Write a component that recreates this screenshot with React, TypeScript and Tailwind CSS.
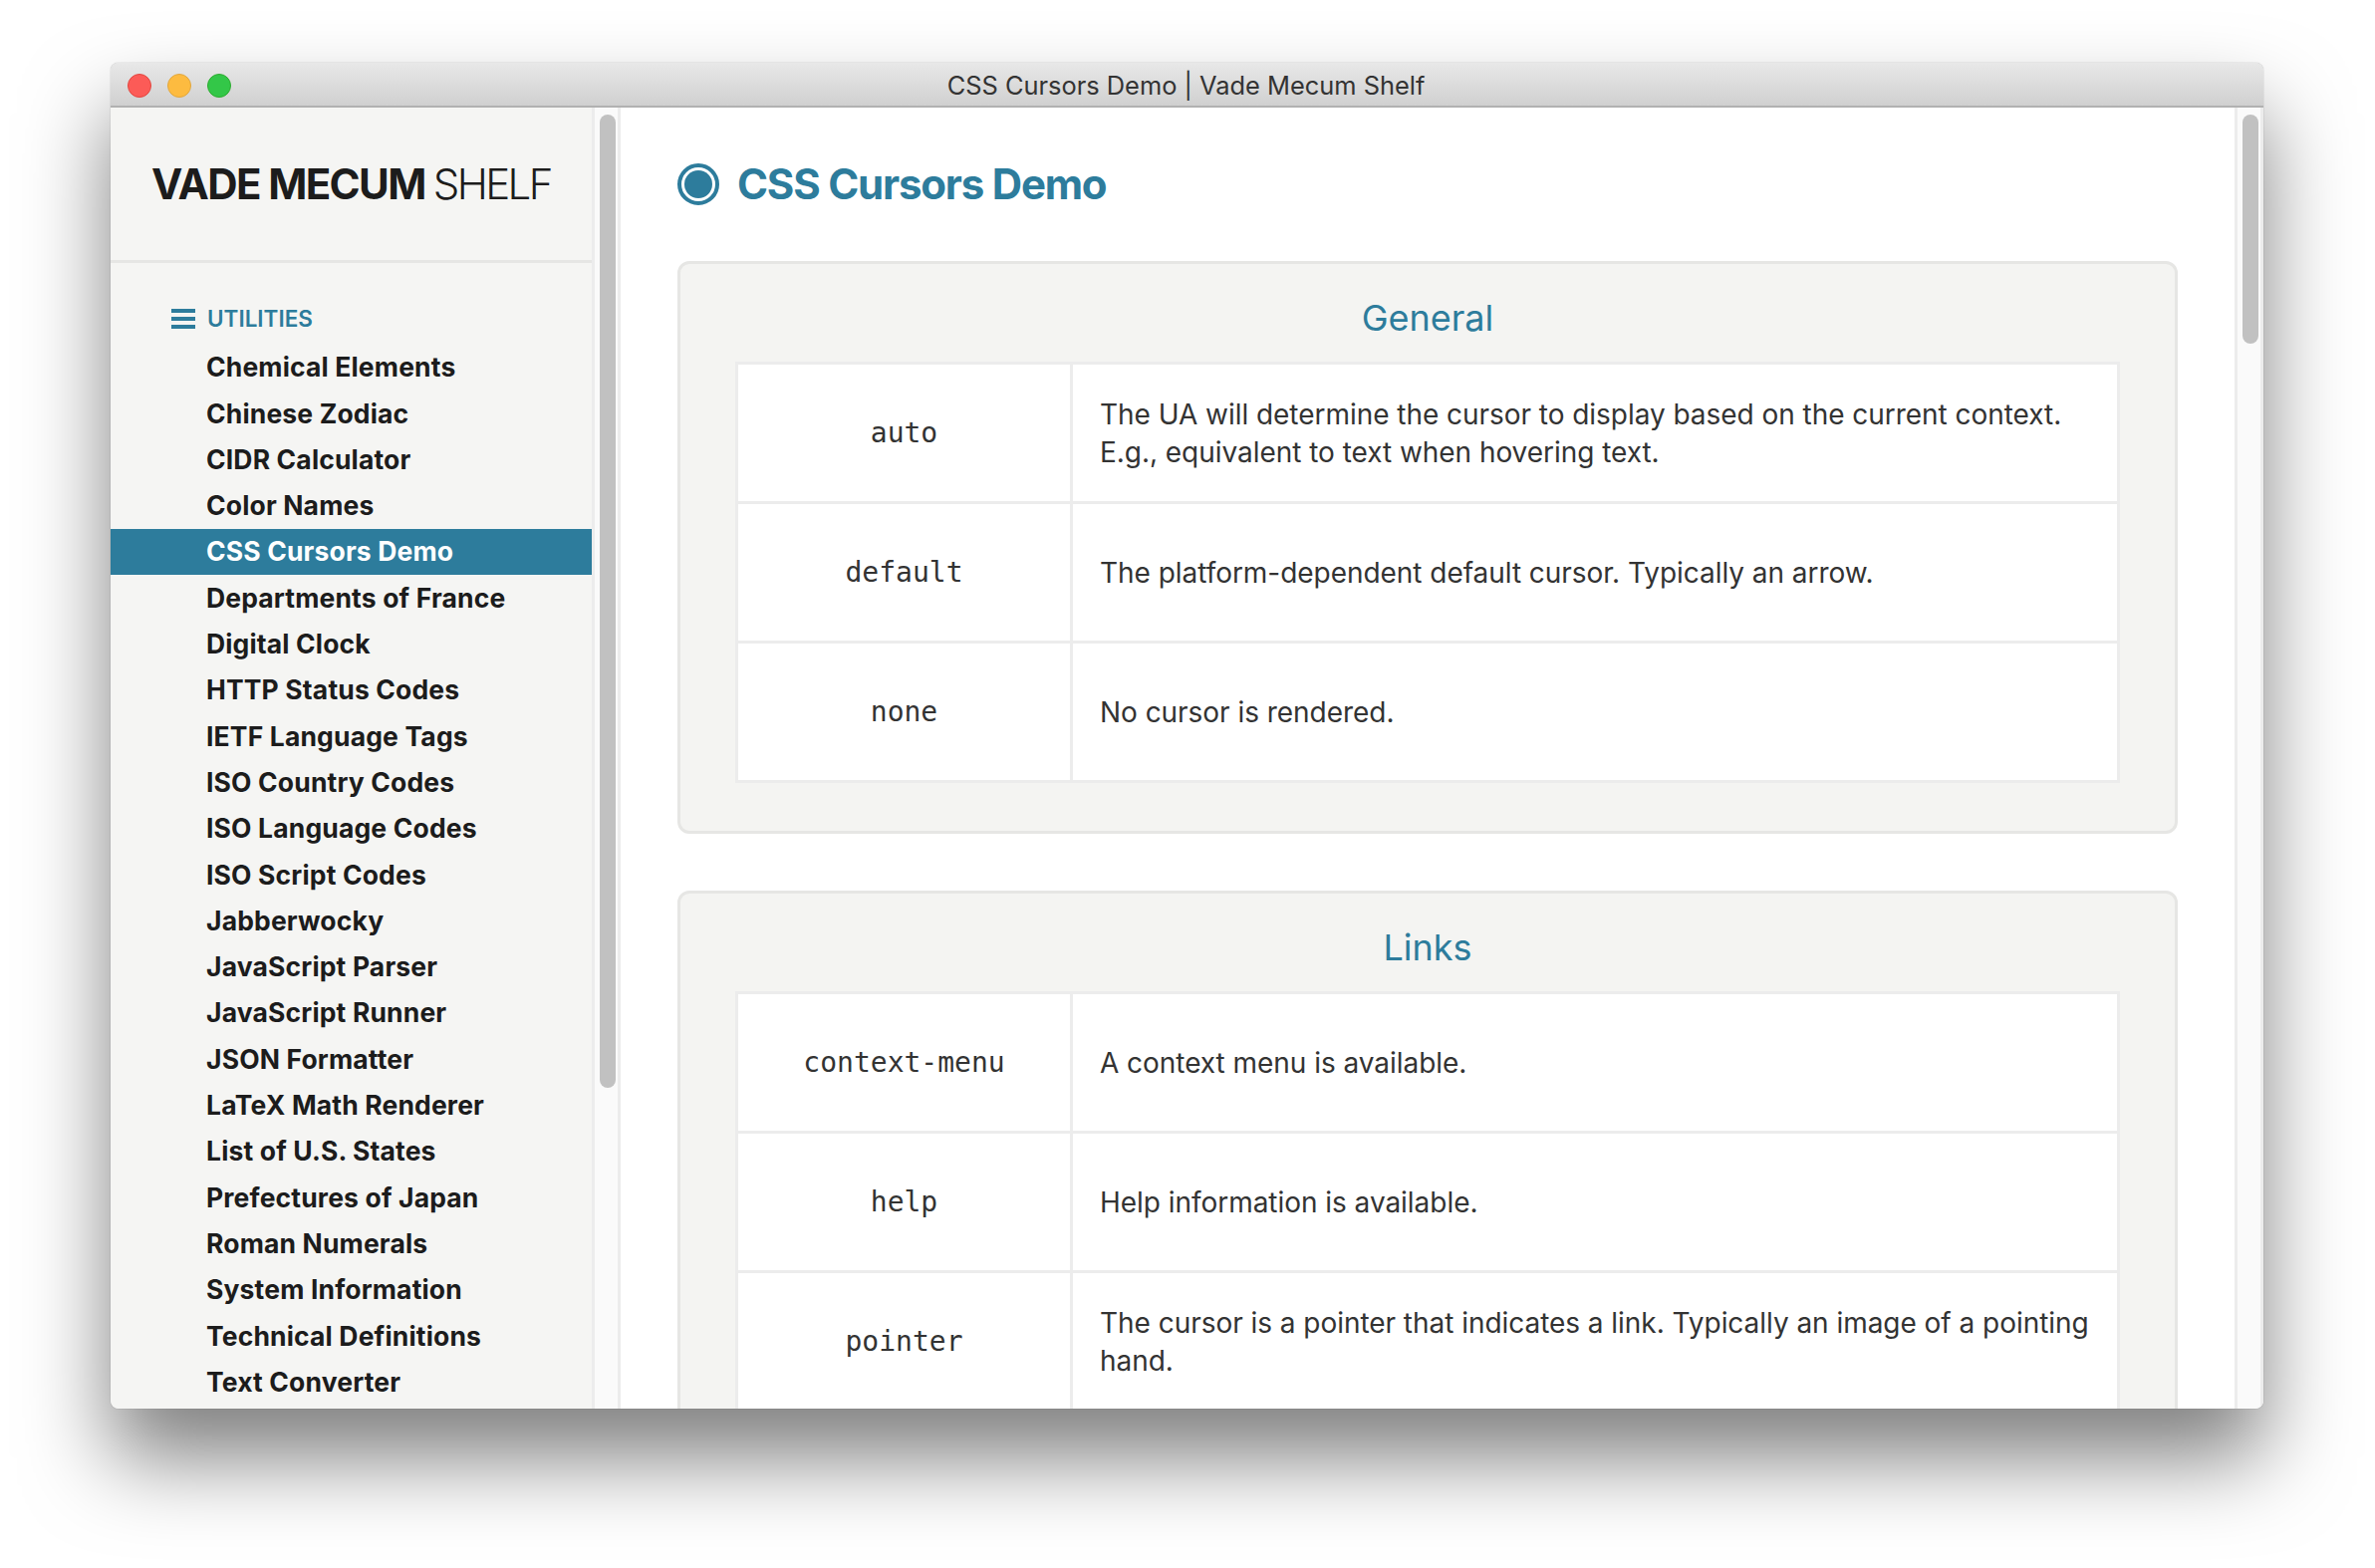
const tools = [
  "Chemical Elements",
  "Chinese Zodiac",
  "CIDR Calculator",
  "Color Names",
  "CSS Cursors Demo",
  "Departments of France",
  "Digital Clock",
  "HTTP Status Codes",
  "IETF Language Tags",
  "ISO Country Codes",
  "ISO Language Codes",
  "ISO Script Codes",
  "Jabberwocky",
  "JavaScript Parser",
  "JavaScript Runner",
  "JSON Formatter",
  "LaTeX Math Renderer",
  "List of U.S. States",
  "Prefectures of Japan",
  "Roman Numerals",
  "System Information",
  "Technical Definitions",
  "Text Converter",
]

const sections = [
  {
    title: "General",
    rows: [
      {
        name: "auto",
        text: "The UA will determine the cursor to display based on the current context. E.g., equivalent to text when hovering text.",
      },
      { name: "default", text: "The platform-dependent default cursor. Typically an arrow." },
      { name: "none", text: "No cursor is rendered." },
    ],
  },
  {
    title: "Links",
    rows: [
      { name: "context-menu", text: "A context menu is available." },
      { name: "help", text: "Help information is available." },
      {
        name: "pointer",
        text: "The cursor is a pointer that indicates a link. Typically an image of a pointing hand.",
      },
    ],
  },
]

const ScrollTrack = ({ thumb }: { thumb: string }) => (
  <div className="w-[29px] shrink-0 border-x-[3px] border-[#ececec] bg-[#fafafa] pl-[5px] pt-[7px]">
    <div className={`w-[16px] rounded-full bg-[#c1c1c1] ${thumb}`} />
  </div>
)

const App = () => {
  return (
    <div className="h-[1574px] w-[2384px] overflow-hidden bg-white pl-[111px] pt-[63px] font-['Inter',sans-serif]">
      <div className="flex h-[1351px] w-[2161px] flex-col overflow-hidden rounded-[8px] shadow-[0_50px_85px_rgba(0,0,0,0.5),0_0_1px_rgba(0,0,0,0.5)]">
        {/* Title bar */}
        <div className="relative flex h-[45px] shrink-0 items-center justify-center border-b-2 border-[#b1b1b1] bg-gradient-to-b from-[#e8e8e8] to-[#d0d0d0] pr-[2px] pt-[4px]">
          <div className="absolute left-[17px] top-[11px] flex gap-[16px]">
            <div className="h-[24px] w-[24px] rounded-full border border-[#e2463f] bg-[#fc5b57]" />
            <div className="h-[24px] w-[24px] rounded-full border border-[#e1a73e] bg-[#fdbb40]" />
            <div className="h-[24px] w-[24px] rounded-full border border-[#2dac2f] bg-[#33c748]" />
          </div>
          <span className="text-[25.4px] text-[#333333]">CSS Cursors Demo | Vade Mecum Shelf</span>
        </div>

        <div className="flex min-h-0 flex-1">
          {/* Sidebar */}
          <aside className="w-[483px] shrink-0 overflow-hidden bg-[#f5f5f3]">
            <div className="flex h-[156px] items-center border-b-[3px] border-[#e6e6e4] pl-[41px] text-[42px] tracking-[-1.6px] text-[#1c1c1c]">
              <span className="font-bold">VADE MECUM</span>
              <span className="ml-[8px] font-light tracking-[-2.6px]">SHELF</span>
            </div>
            <div className="flex items-center gap-[12px] pl-[61px] pt-[41px] text-[22.5px] font-semibold leading-[30px] text-[#2d7c9c]">
              <svg width="24" height="20" viewBox="0 0 24 20" fill="currentColor">
                <rect y="0" width="24" height="4" />
                <rect y="8" width="24" height="4" />
                <rect y="16" width="24" height="4" />
              </svg>
              UTILITIES
            </div>
            <ul className="mt-[11px]">
              {tools.map((tool) => (
                <li
                  key={tool}
                  className={`flex h-[46.3px] items-center pl-[96px] text-[26.5px] font-bold tracking-[0.15px] ${
                    tool === "CSS Cursors Demo" ? "bg-[#2d7c9c] text-white" : "text-[#1c1c1c]"
                  }`}
                >
                  {tool}
                </li>
              ))}
            </ul>
          </aside>

          <ScrollTrack thumb="h-[977px]" />

          {/* Main content */}
          <main className="min-w-0 flex-1 overflow-hidden bg-white pl-[57px] pr-[57px]">
            <div className="flex h-[154px] items-center gap-[18px]">
              <div className="flex h-[42px] w-[42px] items-center justify-center rounded-full border-[4px] border-[#2d7c9c]">
                <div className="h-[28px] w-[28px] rounded-full bg-[#2d7c9c]" />
              </div>
              <h1 className="pb-[1px] text-[42px] font-bold tracking-[-1.2px] text-[#2d7c9c]">CSS Cursors Demo</h1>
            </div>

            <div className="flex flex-col gap-[57px]">
              {sections.map((section) => (
                <section
                  key={section.title}
                  className="rounded-[12px] border-[3px] border-[#e6e6e4] bg-[#f4f4f2] px-[55px] pb-[48px]"
                >
                  <h2 className="flex h-[98px] items-center justify-center pt-[10px] text-[36px] text-[#2d7c9c]">
                    {section.title}
                  </h2>
                  <div className="border-[3px] border-b-0 border-[#ececec] bg-white">
                    {section.rows.map((row) => (
                      <div key={row.name} className="flex h-[140px] border-b-[3px] border-[#ececec]">
                        <div className="flex w-[336px] shrink-0 items-center justify-center border-r-[3px] border-[#ececec] font-['DejaVu_Sans_Mono',monospace] text-[28px] text-[#333333]">
                          {row.name}
                        </div>
                        <div className="flex flex-1 items-center px-[27px] text-[28px] leading-[38px] tracking-[-0.04px] text-[#333333]">
                          <p>{row.text}</p>
                        </div>
                      </div>
                    ))}
                  </div>
                </section>
              ))}
            </div>
          </main>

          <ScrollTrack thumb="h-[230px]" />
        </div>
      </div>
    </div>
  )
}

export default App
